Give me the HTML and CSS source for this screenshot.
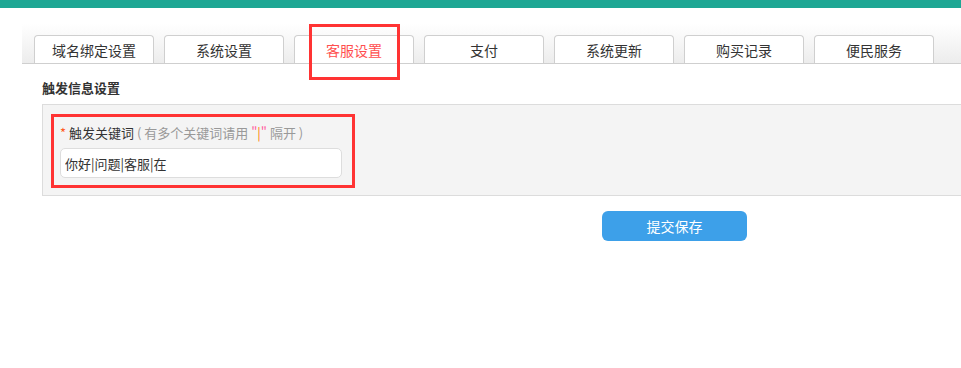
FILE: index.html
```html
<!DOCTYPE html>
<html lang="zh-CN">
<head>
  <meta charset="UTF-8" />
  <meta name="viewport" content="width=device-width, initial-scale=1.0" />
  <title>客服设置</title>
  <link rel="stylesheet" href="styles.css">
</head>
<body>
  <!-- Top colour bar -->
  <div class="topbar"></div>

  <div class="main">
    <!-- Settings tabs -->
    <div class="tabs">
      <a class="tab">域名绑定设置</a>
      <a class="tab">系统设置</a>
      <a class="tab active">客服设置</a>
      <a class="tab">支付</a>
      <a class="tab">系统更新</a>
      <a class="tab">购买记录</a>
      <a class="tab">便民服务</a>
    </div>

    <div class="section">
      <h3 class="section-title">触发信息设置</h3>
      <div class="panel">
        <div class="field">
          <label class="field-label">
            <span class="required">*</span> 触发关键词
            <span class="hint">( 有多个关键词请用 <span class="quote">"</span><span class="pipe">|</span><span class="quote">"</span> 隔开 )</span>
          </label>
          <input type="text" class="field-input" value="你好|问题|客服|在">
        </div>
      </div>
      <div class="actions">
        <button class="btn-save">提交保存</button>
      </div>
    </div>
  </div>
</body>
</html>
```

FILE: styles.css
```css
* {
  margin: 0;
  padding: 0;
  box-sizing: border-box;
}
body {
  font-family: "Noto Sans CJK SC", "Noto Sans", sans-serif;
  font-size: 13px;
  color: #333;
  background: #fff;
  overflow: hidden;
}

.topbar {
  height: 8px;
  background: #1ea794;
}

.main {
  padding: 16px 0 0 22px;
}

/* Tabs */
.tabs {
  display: flex;
  gap: 10px;
  height: 40px;
  padding: 11px 0 0 12px;
  background: linear-gradient(to bottom, #fff, #ececec);
  border-bottom: 1px solid #cfcfcf;
}
.tab {
  position: relative;
  width: 120px;
  height: 28px;
  background: #fff;
  border: 1px solid #cfcfcf;
  border-bottom: none;
  border-radius: 4px 4px 0 0;
  font-size: 14px;
  line-height: 28px;
  text-align: center;
  color: #333;
  cursor: pointer;
}
.tab.active {
  color: #ff4f4f;
}
.tab.active::after {
  content: "";
  position: absolute;
  left: 14px;
  top: -12px;
  width: 85px;
  height: 50px;
  border: 3px solid #ff3333;
}

/* Section */
.section {
  padding-left: 20px;
}
.section-title {
  font-size: 13px;
  font-weight: bold;
  line-height: 20px;
  margin: 14px 0 6px;
}
.panel {
  background: #f4f4f4;
  border: 1px solid #dcdcdc;
  border-right: none;
  padding: 9px 0 7px 8px;
  margin-right: -10px;
}
.field {
  width: 304px;
  border: 3px solid #ff3333;
  padding: 6px 10px 7px 6px;
}
.field-label {
  display: block;
  line-height: 20px;
  margin-bottom: 5px;
  font-size: 13px;
}
.required {
  color: #ff5a1f;
}
.hint {
  color: #999;
  font-size: 13px;
}
.quote {
  color: #ff5fa0;
}
.pipe {
  color: #ff7a00;
}
.field-input {
  display: block;
  width: 282px;
  height: 30px;
  border: 1px solid #ddd;
  border-radius: 5px;
  background: #fff;
  padding: 0 4px;
  font-family: inherit;
  font-size: 13px;
  color: #333;
  outline: none;
}

.actions {
  padding: 15px 0 0 560px;
}
.btn-save {
  width: 145px;
  height: 30px;
  border: none;
  border-radius: 6px;
  background: #3da0e9;
  color: #fff;
  font-family: inherit;
  font-size: 14px;
  cursor: pointer;
}
```
